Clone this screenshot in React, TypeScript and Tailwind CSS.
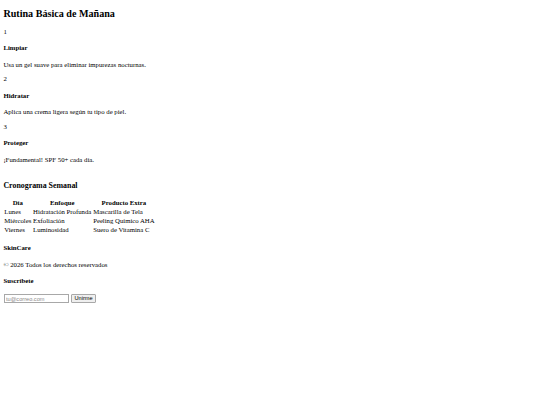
import React from 'react';

// Page is a plain document rendered at 1280px and shown at 540px, so every
// browser default is scaled by 0.421875 here.

const steps = [
  { n: 1, title: 'Limpiar', text: 'Usa un gel suave para eliminar impurezas nocturnas.' },
  { n: 2, title: 'Hidratar', text: 'Aplica una crema ligera según tu tipo de piel.' },
  { n: 3, title: 'Proteger', text: '¡Fundamental! SPF 50+ cada día.' },
];

const schedule = [
  { day: 'Lunes', focus: 'Hidratación Profunda', extra: 'Mascarilla de Tela' },
  { day: 'Miércoles', focus: 'Exfoliación', extra: 'Peeling Químico AHA' },
  { day: 'Viernes', focus: 'Luminosidad', extra: 'Suero de Vitamina C' },
];

const Step: React.FC<{ n: number; title: string; text: string }> = ({ n, title, text }) => (
  <div>
    <div>{n}</div>
    <h4 className="my-[8.7px] font-bold">{title}</h4>
    <p className="my-[6.75px]">{text}</p>
  </div>
);

const App: React.FC = () => {
  return (
    <div className="min-h-screen bg-white px-[3.375px] text-black font-['Liberation_Serif',serif] text-[6.75px] leading-[1.15]">
      {/* --- Routine --- */}
      <section className="flow-root">
        <h2 className="mt-[8.2px] mb-[8.2px] text-[10.125px] font-bold leading-[1.15]">Rutina Básica de Mañana</h2>
        {steps.map((s) => (
          <Step key={s.n} {...s} />
        ))}
      </section>

      {/* --- Schedule --- */}
      <section>
        <h3 className="mt-[11px] mb-[7.9px] text-[7.9px] font-bold leading-[1.15]">Cronograma Semanal</h3>
        <table className="border-separate border-spacing-[0.84px]">
          <thead>
            <tr>
              <th className="px-[0.9px] py-[0.6px] font-bold text-center">Día</th>
              <th className="px-[0.9px] py-[0.6px] font-bold text-center">Enfoque</th>
              <th className="px-[0.9px] py-[0.6px] font-bold text-center">Producto Extra</th>
            </tr>
          </thead>
          <tbody>
            {schedule.map((r) => (
              <tr key={r.day}>
                <td className="px-[0.9px] py-[0.6px]">{r.day}</td>
                <td className="px-[0.9px] py-[0.6px]">{r.focus}</td>
                <td className="px-[0.9px] py-[0.6px]">{r.extra}</td>
              </tr>
            ))}
          </tbody>
        </table>
      </section>

      {/* --- Footer --- */}
      <footer>
        <h4 className="mt-[10.6px] mb-[8.98px] font-bold">SkinCare</h4>
        <p className="my-[6.75px]">© 2026 Todos los derechos reservados</p>
        <h4 className="mt-[8.4px] mb-[8.98px] font-bold">Suscríbete</h4>
        <form className="ml-[0.8px] flex items-center gap-[1.9px]" onSubmit={(e) => e.preventDefault()}>
          <input
            type="email"
            placeholder="tu@correo.com"
            className="h-[9px] w-[65px] border border-[#a8a8a8] bg-white px-[0.84px] font-['Liberation_Sans',sans-serif] text-[5.625px] placeholder:text-[#8a8a8a] outline-none"
          />
          <button
            type="submit"
            className="h-[9px] rounded-[1px] border border-[#a8a8a8] bg-[#efefef] px-[2.5px] font-['Liberation_Sans',sans-serif] text-[5.625px] leading-none text-black"
          >
            Unirme
          </button>
        </form>
      </footer>
    </div>
  );
};

export default App;
